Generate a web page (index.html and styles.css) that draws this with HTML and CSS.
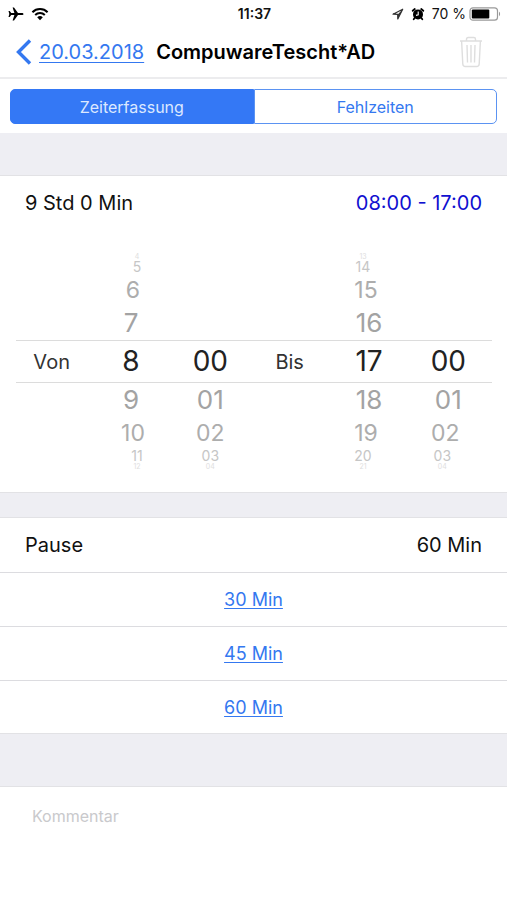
FILE: index.html
```html
<!DOCTYPE html>
<html lang="de">
<head>
<meta charset="utf-8">
<meta name="viewport" content="width=device-width, initial-scale=1">
<title>Zeiterfassung</title>
<link rel="stylesheet" href="styles.css">
</head>
<body>
<div class="status">
  <div class="status-side">
    <svg width="16" height="14" viewBox="0 0 16 14" aria-hidden="true"><path d="M15.500 7c0-.7-.7-1.100-1.600-1.100H10L6 .5H4.600L6.400 5.900H3.200L1.700 4H.5l.8 3-.8 3h1.200l1.500-1.900h3.200L4.600 13.500H6l4-5.400h3.900c.9 0 1.600-.4 1.600-1.100z"/></svg>
    <svg width="18" height="14" viewBox="0 0 18 14" aria-hidden="true"><g fill="none" stroke="#000" stroke-width="2"><path d="M1.400 5.200a10.700 10.700 0 0 1 15.200 0"/><path d="M4.200 8a6.800 6.800 0 0 1 9.600 0"/></g><path d="M9 13.200 6.200 10.300a4 4 0 0 1 5.600 0z"/></svg>
  </div>
  <span class="clock">11:37</span>
  <div class="status-side status-end">
    <svg width="12" height="12" viewBox="0 0 12 12" aria-hidden="true"><path d="M10.700 1.200 1 6.200l4.700.2.100 4.600z" fill="none" stroke="#333" stroke-width="1.200" stroke-linejoin="round"/><path d="M10.700 1.200 5.700 6.400l.1 4.600z" fill="#333"/></svg>
    <svg width="14" height="14" viewBox="0 0 14 14" aria-hidden="true"><circle cx="7" cy="7.400" r="5"/><path d="M1.700 3.800 3.800 2M12.300 3.800 10.200 2M3.600 11l-.9 1.200M10.400 11l.9 1.200" stroke="#000" stroke-width="1.800" stroke-linecap="round"/><path d="M7.200 4.600v3.200L5 8.400" fill="none" stroke="#fff" stroke-width="1.100"/></svg>
    <span class="charge">70 %</span>
    <svg width="32" height="14" viewBox="0 0 32 14" aria-hidden="true"><rect x="1" y=".8" width="27.500" height="12.400" rx="3" fill="#fff" stroke="#999" stroke-width="1.200"/><rect x="2.800" y="2.500" width="17.500" height="9" rx="1"/><path d="M30 4.800c1.400.5 1.400 3.900 0 4.400z" fill="#999"/></svg>
  </div>
</div>

<header class="nav">
  <a class="back" href="#">
    <svg width="16" height="26" viewBox="0 0 16 26" aria-hidden="true"><path d="M14 1.500 2.500 13 14 24.500" fill="none" stroke="#3478f0" stroke-width="3.400"/></svg>
    <span class="back-date">20.03.2018</span>
  </a>
  <h1 class="title">CompuwareTescht*AD</h1>
  <button class="delete" type="button" aria-label="Löschen">
    <svg width="24" height="32" viewBox="0 0 24 32" fill="none" stroke="#dedede" stroke-width="1.400" aria-hidden="true"><path d="M1 5h22M7.500 5V3.200Q7.500 1.500 9.200 1.500h5.600q1.700 0 1.700 1.700V5M2.600 5l1.200 23q.2 2.500 2.500 2.500h11.400q2.300 0 2.500-2.500L21.400 5M8 9l.5 17.500M12 9v17.500M16 9l-.5 17.500"/></svg>
  </button>
</header>

<main>
  <div class="segments">
    <button class="segment segment-on" type="button">Zeiterfassung</button>
    <button class="segment" type="button">Fehlzeiten</button>
  </div>

  <section class="group">
    <div class="row">
      <span>9 Std 0 Min</span>
      <span class="range">08:00 - 17:00</span>
    </div>
    <div class="picker">
      <div class="picker-label">Von</div>
      <ul class="wheel lean-right" role="listbox" aria-label="Von Stunde">
        <li class="step4">4</li><li class="step3">5</li><li class="step2">6</li><li class="step1">7</li>
        <li class="current">8</li>
        <li class="step1">9</li><li class="step2">10</li><li class="step3">11</li><li class="step4">12</li>
      </ul>
      <ul class="wheel" role="listbox" aria-label="Von Minute">
        <li class="step4"></li><li class="step3"></li><li class="step2"></li><li class="step1"></li>
        <li class="current">00</li>
        <li class="step1">01</li><li class="step2">02</li><li class="step3">03</li><li class="step4">04</li>
      </ul>
      <div class="picker-label">Bis</div>
      <ul class="wheel lean-left" role="listbox" aria-label="Bis Stunde">
        <li class="step4">13</li><li class="step3">14</li><li class="step2">15</li><li class="step1">16</li>
        <li class="current">17</li>
        <li class="step1">18</li><li class="step2">19</li><li class="step3">20</li><li class="step4">21</li>
      </ul>
      <ul class="wheel lean-left" role="listbox" aria-label="Bis Minute">
        <li class="step4"></li><li class="step3"></li><li class="step2"></li><li class="step1"></li>
        <li class="current">00</li>
        <li class="step1">01</li><li class="step2">02</li><li class="step3">03</li><li class="step4">04</li>
      </ul>
    </div>
  </section>

  <section class="group">
    <div class="row">
      <span>Pause</span>
      <span>60 Min</span>
    </div>
    <div class="option"><a href="#">30 Min</a></div>
    <div class="option"><a href="#">45 Min</a></div>
    <div class="option"><a href="#">60 Min</a></div>
  </section>

  <section class="comment">
    <textarea aria-label="Kommentar" placeholder="Kommentar"></textarea>
  </section>
</main>
</body>
</html>
```
FILE: styles.css
```css
* {
  box-sizing: border-box;
}

body {
  margin: 0;
  min-height: 100vh;
  display: flex;
  flex-direction: column;
  background: #fff;
  color: #111;
  font-family: Inter, "Liberation Sans", sans-serif;
  font-size: 20px;
}

svg {
  display: block;
  flex: none;
}

a {
  color: #3478f0;
  text-decoration-thickness: 1px;
  text-underline-offset: 2px;
}

button {
  padding: 0;
  border: 0;
  background: none;
  font: inherit;
}

.status {
  display: flex;
  align-items: center;
  height: 27px;
  padding: 0 6px 0 8px;
}

.status-side {
  flex: 1;
  display: flex;
  align-items: center;
  gap: 7px;
}

.status-end {
  justify-content: flex-end;
}

.clock {
  font-size: 14px;
  font-weight: 600;
}

.charge {
  font-size: 14px;
  margin-right: -4px;
}

.nav {
  display: flex;
  align-items: center;
  height: 52px;
  padding: 0 24px 0 16px;
  border-bottom: 2px solid #ececee;
}

.back {
  display: flex;
  align-items: center;
  gap: 7px;
  text-decoration: none;
}

.back-date {
  text-decoration: underline;
  text-decoration-thickness: 1px;
  text-underline-offset: 3px;
}

.title {
  flex: 1;
  margin: 0 0 0 12px;
  color: #000;
  font-size: 20px;
  font-weight: 600;
  white-space: nowrap;
}

main {
  flex: 1;
  display: flex;
  flex-direction: column;
  background: #eeeef3;
}

.segments {
  display: flex;
  padding: 10px 10px 9px;
  background: #fff;
}

.segment {
  flex: 1;
  height: 35px;
  border: 1px solid #5b93f2;
  border-radius: 0 5px 5px 0;
  color: #3478f0;
  font-size: 16px;
}

.segment-on {
  border-color: #3478f5;
  border-radius: 5px 0 0 5px;
  background: #3478f5;
  color: #dce8ff;
}

.group {
  background: #fff;
  border: solid #e2e2e5;
  border-width: 1px 0;
  margin-bottom: 24px;
}

.segments + .group {
  margin-top: 42px;
}

.row {
  display: flex;
  align-items: center;
  justify-content: space-between;
  height: 54px;
  padding: 0 25px;
}

.range {
  color: #1010d0;
}

.picker {
  display: grid;
  grid-template-columns: repeat(6, 1fr);
  align-items: center;
  margin: 23px 15px 22px 16px;
  position: relative;
}

/* Selection band across all wheels */
.picker::before {
  content: "";
  position: absolute;
  inset: 87px 0;
  border: solid #dcdcdc;
  border-width: 1px 0;
}

.picker-label,
.wheel {
  margin: 0;
  padding: 0 8px 0 0;
  text-align: center;
  list-style: none;
}

.picker-label {
  color: #333;
  font-size: 20px;
}

.current {
  height: 43px;
  line-height: 43px;
  color: #222;
  font-size: 28px;
}

.step1 {
  height: 34px;
  line-height: 34px;
  color: #a3a3a3;
  font-size: 26px;
}

.step2 {
  height: 32px;
  line-height: 32px;
  color: #adadad;
  font-size: 23px;
}

.step3 {
  height: 14px;
  line-height: 14px;
  color: #c6c6c6;
  font-size: 14px;
}

.step4 {
  height: 7px;
  line-height: 7px;
  color: #dedede;
  font-size: 7px;
}

.lean-right .step2 {
  padding-left: 4px;
}

.lean-right .step3,
.lean-right .step4 {
  padding-left: 12px;
}

.lean-left .step2 {
  padding-right: 6px;
}

.lean-left .step3,
.lean-left .step4 {
  padding-right: 12px;
}

.option {
  display: flex;
  align-items: center;
  justify-content: center;
  height: 54px;
  border-top: 1px solid #dcdce0;
  font-size: 18px;
}

.group + .group .option:last-child {
  height: 53px;
}

.comment {
  flex: 1;
  display: flex;
  margin-top: 28px;
  background: #fff;
  border-top: 1px solid #e2e2e5;
}

.comment textarea {
  flex: 1;
  padding: 19px 32px;
  border: 0;
  outline: 0;
  resize: none;
  background: none;
  font: inherit;
  font-size: 16px;
}

.comment textarea::placeholder {
  color: #c9c9cc;
}
```
